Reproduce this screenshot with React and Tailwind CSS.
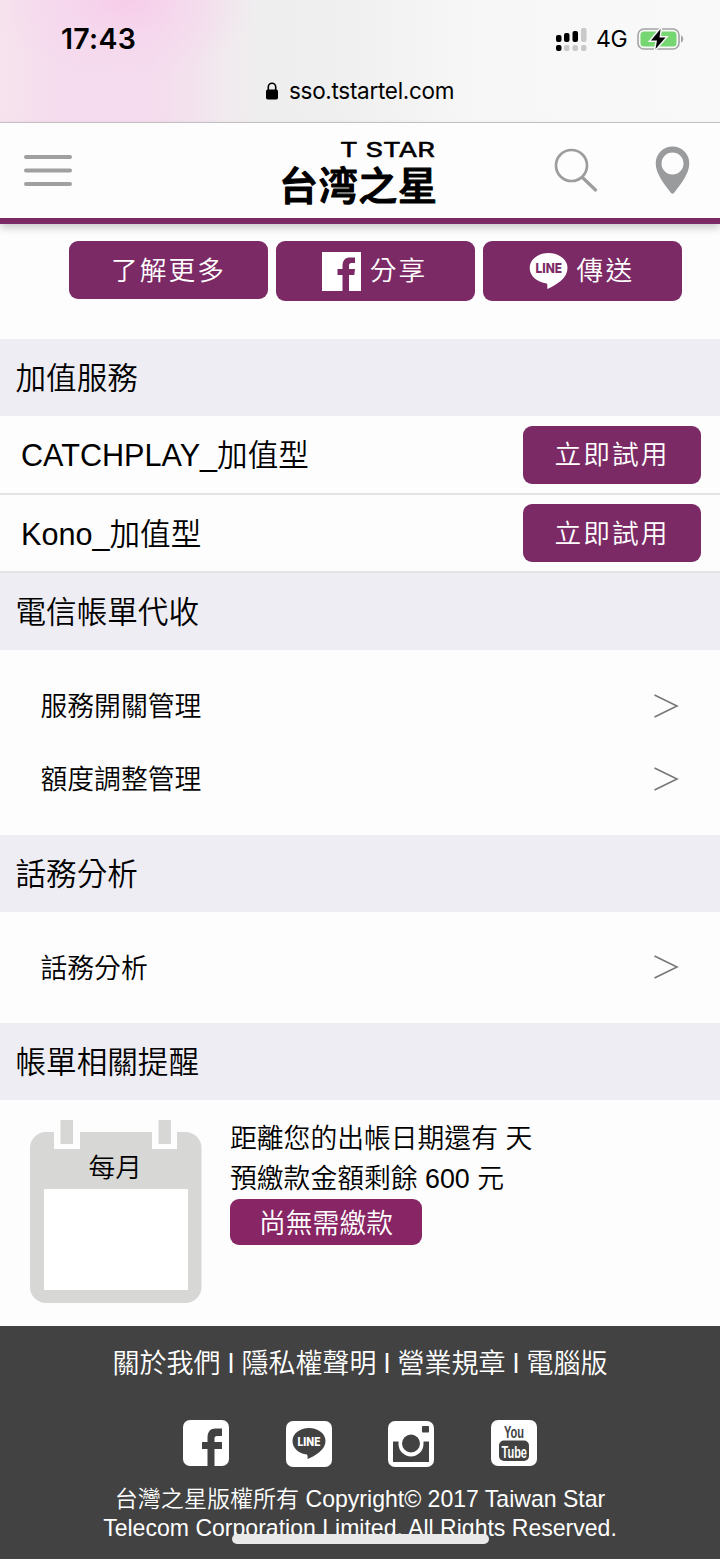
const services = ["CATCHPLAY_加值型", "Kono_加值型"];
const footerLinks = ["關於我們", "隱私權聲明", "營業規章", "電腦版"];

function StatusBar() {
  return (
    <div className="h-[123px] border-b border-[#c8c6c9] bg-[#f4f3f5] bg-[radial-gradient(ellipse_130px_80px_at_125px_0px,#f7cdea_0%,#f6d3ec88_45%,#f5dcee00_100%),linear-gradient(90deg,#f6e3ed_0px,#f5dcee_60px,#f5dcee_150px,#f3e3ee_195px,#f1eaee_225px,#efeeef_260px,#efefef_330px,#f7f7f7_480px,#f9f9f9_720px)] text-black">
      <div className="flex h-[78px] items-center justify-between pl-[61px] pr-[36px] font-[Inter,sans-serif]">
        <span className="text-[28.5px] font-semibold leading-none tracking-[0.3px]">17:43</span>
        <div className="flex items-center">
          <svg className="h-[23px] w-[32px]" viewBox="0 0 32 23">
            <g fill="#000">
              <rect x="0" y="7" width="5.500" height="7" rx="2" />
              <rect x="8" y="5" width="5.500" height="9" rx="2" />
              <rect x="16.500" y="3" width="5.500" height="11" rx="2" />
              <rect x="0" y="17" width="5.500" height="6" rx="2" />
            </g>
            <g fill="#c9c8ca">
              <rect x="25" y="0" width="5.500" height="14" rx="2" />
              <rect x="8" y="17" width="5.500" height="6" rx="2" />
              <rect x="16.500" y="17" width="5.500" height="6" rx="2" />
              <rect x="25" y="17" width="5.500" height="6" rx="2" />
            </g>
          </svg>
          <span className="ml-[8px] w-[33px] text-[23px] font-normal leading-none tracking-[-0.3px]">4G</span>
          <svg className="ml-[8px] h-[24px] w-[47px]" viewBox="0 0 47 24">
            <rect x="1" y="2" width="41" height="20" rx="6" fill="none" stroke="#a4a4a4" strokeWidth="1.600" />
            <rect x="3.500" y="4.500" width="36" height="15" rx="3.500" fill="#76d672" />
            <path d="M44 8.500c3 1 3 6 0 7z" fill="#a4a4a4" />
            <path d="M23.500 2L14 13.500h6L18.500 22L28.500 10.500h-6z" fill="#000" stroke="#f6f6f6" strokeWidth="3" />
            <path d="M23.500 2L14 13.500h6L18.500 22L28.500 10.500h-6z" fill="#000" />
          </svg>
        </div>
      </div>
      <div className="flex h-[26px] items-center pl-[265px] font-[Inter,sans-serif]">
        <svg className="h-[18px] w-[14px]" viewBox="0 0 14 18">
          <path d="M3.300 9V5a3.700 3.700 0 0 1 7.400 0v4" fill="none" stroke="#000" strokeWidth="1.600" />
          <rect x="1" y="7.500" width="12" height="10" rx="1.800" />
        </svg>
        <span className="ml-[10px] whitespace-nowrap text-[22.5px] font-normal tracking-[-0.3px]">sso.tstartel.com</span>
      </div>
    </div>
  );
}

function Header() {
  return (
    <header className="relative flex h-[101px] border-b-6 border-[#7b2a66] bg-[#fdfdfd] shadow-[0_4px_8px_rgba(0,0,0,0.2)]">
      <svg className="ml-[24px] mt-[30px] h-[36px] w-[48px]" viewBox="0 0 48 36" stroke="#a0a0a0" strokeWidth="4" strokeLinecap="round">
        <path d="M2 4h44M2 17.500h44M2 31h44" />
      </svg>
      <div className="ml-[206px] mt-[13px] flex w-[162px] flex-col items-end">
        <svg className="mr-[4px] h-[26px] w-[96px]" viewBox="0 0 96 26">
          <text x="0" y="21" fontSize="20" strokeWidth="0.500" stroke="#000" fontWeight="400" textLength="95" lengthAdjust="spacingAndGlyphs" className="font-[Inter,sans-serif]">T STAR</text>
        </svg>
        <svg className="h-[56px] w-[162px] overflow-visible" viewBox="0 0 162 56">
          <text x="1" y="37.500" fontSize="39" fontWeight="500" stroke="#000" strokeWidth="1.200" strokeLinejoin="round" textLength="158" className="font-['Noto_Sans_CJK_TC',sans-serif]">台湾之星</text>
        </svg>
      </div>
      <div className="ml-auto mr-[30px] flex">
        <svg className="mt-[25px] h-[46px] w-[46px]" viewBox="0 0 46 46" fill="none" stroke="#9b9d9e">
          <circle cx="18.500" cy="17.500" r="15.500" strokeWidth="2.700" />
          <path d="M29.500 29.500l13 12.500" strokeWidth="3.200" strokeLinecap="round" />
        </svg>
        <svg className="ml-[55px] mt-[23px] h-[50px] w-[36px]" viewBox="0 0 36 50">
          <path fillRule="evenodd" fill="#999b9c" d="M18.500 .5A16.700 16.700 0 0 0 1.700 17.500C1.700 28 11 39 17 47q1.500 1.500 3 0C26 39 35.300 28 35.300 17.500A16.700 16.700 0 0 0 18.500 .5zM18.500 6.500a11 11 0 1 1 0 22a11 11 0 1 1 0-22z" />
        </svg>
      </div>
    </header>
  );
}

function FacebookIcon() {
  return (
    <svg className="h-[39px] w-[39px]" viewBox="0 0 39 39">
      <rect width="39" height="39" fill="#fff" />
      <path d="M20.500 39V23H15.500v-6h5v-3C20.500 8 23.500 5.500 28 5.500h5v5.500h-3.500c-2 0-2.500 1-2.500 2.500v3.500H33l-.7 6H27v16z" fill="#7b2a66" />
    </svg>
  );
}

function LineIcon() {
  return (
    <svg className="h-[38px] w-[39px] tracking-normal" viewBox="0 0 39 38">
      <path d="M19.500 1C9 1 .7 7.500 .7 16c0 8 7 14 17 15.500q1 .3.500 5.500c9-4 20.300-10.500 20.300-21C38.500 7.500 30 1 19.500 1z" fill="#fff" />
      <text x="6.500" y="21" fontSize="13.500" fontWeight="800" textLength="26.500" lengthAdjust="spacingAndGlyphs" fill="#7b2a66" className="font-[Inter,sans-serif]">LINE</text>
    </svg>
  );
}

function ShareButtons() {
  const button = "flex w-[199px] items-center rounded-[9px] bg-[#7b2a66] text-[26.7px] leading-[32px] tracking-[2.1px] text-white";
  return (
    <div className="flex h-[115px] items-start gap-[7.8px] pl-[69px] pt-[17px]">
      <button className={`${button} h-[58px] justify-center pt-px`}>了解更多</button>
      <button className={`${button} h-[60px] pl-[46px]`}>
        <FacebookIcon />
        <span className="ml-[9px]">分享</span>
      </button>
      <button className={`${button} h-[60px] pl-[46px]`}>
        <LineIcon />
        <span className="ml-[9px]">傳送</span>
      </button>
    </div>
  );
}

function SectionTitle({ children }) {
  return <h2 className="flex h-[76.5px] items-center bg-[#eeedf3] pl-[15.5px] pt-[4px] text-[30.6px]">{children}</h2>;
}

function ServiceRow({ name }) {
  return (
    <div className="flex h-[78.5px] items-center justify-between border-b-2 border-[#e3e3e4] pl-[21px] pr-[19px]">
      <span className="pt-[4px] text-[30.6px]">{name}</span>
      <button className="mt-px h-[58px] w-[178px] rounded-[9px] bg-[#7b2a66] pt-px text-[26.7px] tracking-[2.1px] text-white">立即試用</button>
    </div>
  );
}

function LinkRow({ name }) {
  return (
    <div className="flex h-[73px] items-center justify-between pl-[40.5px] pr-[41px] text-[26.8px]">
      <span className="pt-[4px]">{name}</span>
      <svg className="h-[24px] w-[26px]" viewBox="0 0 26 24" fill="none" stroke="#777" strokeWidth="1.600">
        <path d="M1.500 1l22.500 11L1.500 23" />
      </svg>
    </div>
  );
}

function Calendar() {
  return (
    <svg className="h-[184px] w-[172px]" viewBox="0 0 172 184">
      <rect y="12" width="171.500" height="171" rx="16" fill="#d7d7d6" />
      <path d="M24 11h26v18H24zM122 11h25v18h-25z" fill="#fdfdfd" />
      <path d="M30.500 0H43v24H30.500zM128.500 0H141v24h-12.500z" fill="#d7d7d6" />
      <rect x="14" y="69" width="144" height="101" fill="#fff" />
      <text x="58.500" y="56.500" fontSize="26.700">每月</text>
    </svg>
  );
}

function BillReminder() {
  return (
    <div className="flex h-[226.5px] pl-[30px] pt-[20.5px]">
      <Calendar />
      <div className="ml-[28px] mt-[-1px] text-[26.8px] leading-[40px]">
        <p>距離您的出帳日期還有 天</p>
        <p>預繳款金額剩餘 600 元</p>
        <button className="block h-[46px] w-[192px] rounded-[9px] bg-[#882665] pt-[4px] text-white">尚無需繳款</button>
      </div>
    </div>
  );
}

function SocialLinks() {
  return (
    <div className="flex gap-[56.6px] pl-[183px]">
      <svg className="h-[47px] w-[46px]" viewBox="0 0 46 47">
        <rect width="46" height="46" rx="7" fill="#fff" />
        <path d="M24.500 46V29H19v-7h5.500V18c0-6.500 3-9.500 8-9.500H39V16h-4.500c-2.500 0-3 1-3 2.500V22H39v7h-7.500v17z" fill="#424242" />
      </svg>
      <svg className="h-[47px] w-[46px]" viewBox="0 0 46 47">
        <rect y="1" width="46" height="46" rx="7" fill="#fff" />
        <path d="M23 8C14 8 6.500 13.500 6.500 21c0 7 6 12.500 14.500 13.500q1 1 .5 4.500C29 36 39.500 30 39.500 21C39.500 13.500 32 8 23 8z" fill="#424242" />
        <text x="11.500" y="25.500" fontSize="11.500" fontWeight="800" textLength="23" lengthAdjust="spacingAndGlyphs" fill="#fff" className="font-[Inter,sans-serif]">LINE</text>
      </svg>
      <svg className="h-[47px] w-[46px]" viewBox="0 0 46 47">
        <rect y="1" width="46" height="46" rx="7" fill="#fff" />
        <path d="M5 21.500h5.500v2.500a12.500 12.500 0 0 0 25 0v-2.500H41V42H5z" fill="#424242" />
        <circle cx="23" cy="23.500" r="9" fill="#424242" />
        <rect x="34" y="6" width="7" height="6.500" rx=".8" fill="#424242" />
      </svg>
      <svg className="h-[47px] w-[46px]" viewBox="0 0 46 47">
        <rect width="46" height="46" rx="7" fill="#fff" />
        <rect x="8" y="20.500" width="30" height="20.500" rx="5" fill="#424242" />
        <g className="font-['Liberation_Sans',sans-serif] font-bold">
          <text x="13" y="18" fontSize="17" textLength="20" lengthAdjust="spacingAndGlyphs" fill="#424242">You</text>
          <text x="10.500" y="37.500" fontSize="17" textLength="25.500" lengthAdjust="spacingAndGlyphs" fill="#fff">Tube</text>
        </g>
      </svg>
    </div>
  );
}

function Footer() {
  return (
    <footer className="relative h-[233px] bg-[#424242] pt-[18px] text-white">
      <nav className="flex justify-center whitespace-pre text-[27px] leading-[40px]">
        {footerLinks.map((link, i) => (
          <span key={link}>
            {i > 0 && " l "}
            {link}
          </span>
        ))}
      </nav>
      <div className="mt-[36px]">
        <SocialLinks />
      </div>
      <p className="mt-[17.5px] text-center text-[23.05px] leading-[29px]">
        台灣之星版權所有 Copyright© 2017 Taiwan Star
        <br />
        Telecom Corporation Limited. All Rights Reserved.
      </p>
      <div className="absolute bottom-[15px] left-[232px] h-[10px] w-[257px] rounded-full bg-[#e9e9e9]" />
    </footer>
  );
}

export default function App() {
  return (
    <div className="h-[1559px] w-[720px] overflow-hidden bg-[#fdfdfd] font-['Liberation_Sans','Noto_Sans_CJK_TC',sans-serif] font-[350] text-black">
      <StatusBar />
      <Header />
      <ShareButtons />
      <SectionTitle>加值服務</SectionTitle>
      <div className="pt-[0.5px]">
        {services.map((name) => (
          <ServiceRow key={name} name={name} />
        ))}
      </div>
      <SectionTitle>電信帳單代收</SectionTitle>
      <div className="h-[185.5px] pt-[19.5px]">
        <LinkRow name="服務開關管理" />
        <LinkRow name="額度調整管理" />
      </div>
      <SectionTitle>話務分析</SectionTitle>
      <div className="h-[111.5px] pt-[19px]">
        <LinkRow name="話務分析" />
      </div>
      <SectionTitle>帳單相關提醒</SectionTitle>
      <BillReminder />
      <Footer />
    </div>
  );
}
